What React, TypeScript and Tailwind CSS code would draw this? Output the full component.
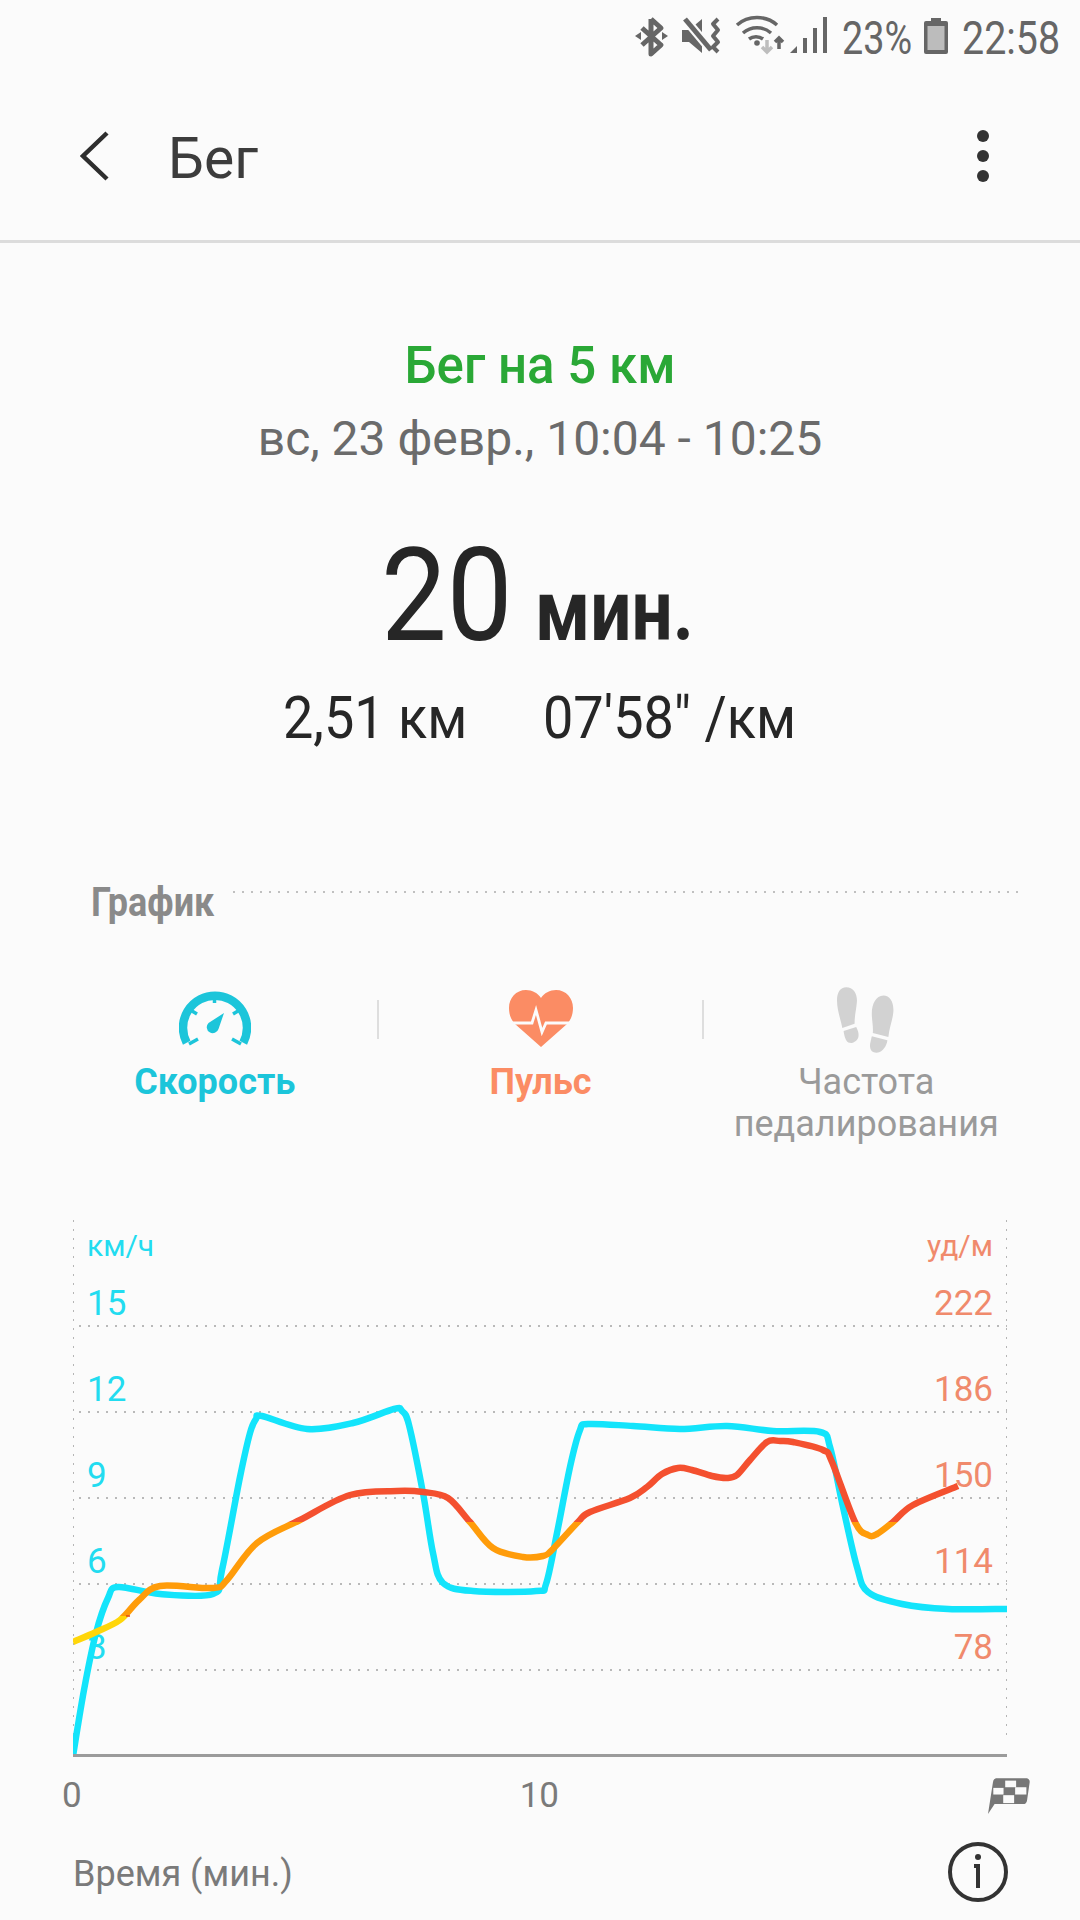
// Running workout detail screen
type Pt = [number, number];

// chart box starts at x=73, y=1220 in page coordinates
const OX = 73;
const OY = 1220;

const SPEED: Pt[] = [
  [73, 1756], [84, 1690], [96, 1633], [108, 1598], [118, 1587], [160, 1594], [213, 1594], [222, 1570],
  [240, 1477], [250, 1433], [256, 1419], [262, 1416], [307, 1429], [353, 1423], [394, 1409], [402, 1411], [409, 1425],
  [423, 1493], [433, 1553], [443, 1583], [473, 1591], [536, 1591], [546, 1584], [557, 1533],
  [570, 1467], [580, 1430], [588, 1424], [633, 1426], [680, 1429], [727, 1426], [773, 1431], [820, 1432],
  [830, 1447], [843, 1507], [857, 1567], [868, 1592], [902, 1604], [948, 1609], [1007, 1609],
];

const PULSE: Pt[] = [
  [73, 1642], [96, 1632], [120, 1620], [139, 1600], [160, 1586], [213, 1588], [227, 1580],
  [257, 1543], [300, 1520], [350, 1495], [397, 1491], [423, 1492], [448, 1498], [470, 1522],
  [493, 1548], [523, 1557], [543, 1556], [552, 1550], [578, 1522], [590, 1512], [630, 1498],
  [647, 1487], [662, 1474], [678, 1468], [692, 1470], [712, 1476], [727, 1478], [737, 1475],
  [750, 1460], [767, 1442], [780, 1441], [793, 1442], [823, 1450], [832, 1462], [855, 1522],
  [868, 1535], [877, 1534], [893, 1522], [913, 1505], [958, 1486],
];

// catmull-rom through the points, returned as cubic beziers
function smooth(points: Pt[]) {
  const p = points.map(([x, y]): Pt => [x - OX, y - OY]);
  let d = `M${p[0][0]} ${p[0][1]}`;
  for (let i = 0; i < p.length - 1; i++) {
    const a = p[Math.max(i - 1, 0)];
    const b = p[i];
    const c = p[i + 1];
    const e = p[Math.min(i + 2, p.length - 1)];
    const c1x = b[0] + (c[0] - a[0]) / 6;
    const c1y = b[1] + (c[1] - a[1]) / 6;
    const c2x = c[0] - (e[0] - b[0]) / 6;
    const c2y = c[1] - (e[1] - b[1]) / 6;
    d += ` C${c1x.toFixed(1)} ${c1y.toFixed(1)} ${c2x.toFixed(1)} ${c2y.toFixed(1)} ${c[0]} ${c[1]}`;
  }
  return d;
}

const ROWS = [
  { left: "15", right: "222" },
  { left: "12", right: "186" },
  { left: "9", right: "150" },
  { left: "6", right: "114" },
  { left: "3", right: "78" },
];

function StatusIcons() {
  return (
    <svg width="200" height="50" viewBox="0 0 200 50" fill="none" className="shrink-0 -mt-[2px]">
      {/* bluetooth */}
      <path d="M21 9v35l10-9-19-17M21 9l10 9-19 17" stroke="#666" strokeWidth="5" strokeLinejoin="round" />
      <path d="M5 26l6-4v8zM38 26l-6-4v8z" fill="#666" />
      {/* muted speaker */}
      <path d="M52 20h7l13-11v34L59 32h-7z" fill="#666" />
      <path d="M55 9l26 31" stroke="#fbfbfb" strokeWidth="9" />
      <path d="M55 9l26 31" stroke="#666" strokeWidth="5" />
      <path d="M88 9l-5 5 5 6-5 6 5 6-5 5 5 5" stroke="#666" strokeWidth="4" strokeLinejoin="round" />
      {/* wifi */}
      <path d="M107 15c11-10 29-10 40 0M113 23c8-7 20-7 28 0M119 29c4-3 10-3 14 0" stroke="#666" strokeWidth="3.5" />
      <circle cx="127" cy="33" r="2.8" fill="#666" />
      <path d="M137 30v12M132 37l5 5 5-5" stroke="#bdbdbd" strokeWidth="3.5" />
      <path d="M149 39V28M145 32l4-4 4 4" stroke="#666" strokeWidth="3.5" />
      {/* signal */}
      <path d="M160 43l7-7v7z" fill="#666" />
      <rect x="173" y="28" width="4" height="15" fill="#666" />
      <rect x="183" y="18" width="4" height="25" fill="#666" />
      <rect x="193" y="7" width="4" height="36" fill="#666" />
    </svg>
  );
}

function Battery() {
  return (
    <svg width="24" height="36" viewBox="0 0 24 36" className="block shrink-0">
      <rect x="7" y="0" width="10" height="4" fill="#666" />
      <rect x="0" y="3" width="24" height="33" rx="2" fill="#666" />
      <rect x="3.5" y="8" width="17" height="24" fill="#bcbcbc" />
    </svg>
  );
}

function SpeedIcon() {
  return (
    <svg width="72" height="58" viewBox="0 0 72 58" fill="none" className="block">
      <path d="M7.7 52.7A32 32 0 1 1 64.3 52.7" stroke="#1cc5da" strokeWidth="8.5" />
      <path d="M35.5 6v7M13 21l5 3M59 21l-5 3M10 54l9-5M62 54l-9-5" stroke="#1cc5da" strokeWidth="3.5" />
      <path d="M45 23L39.5 39a6 6 0 1 1-10-6z" fill="#1cc5da" />
    </svg>
  );
}

function HeartIcon() {
  return (
    <svg width="64" height="57" viewBox="0 0 64 57" className="block">
      <path
        d="M32 57L6 34C2 30 0 24 0 18 0 8 7 0 17 0c6 0 12 3 15 8 3-5 9-8 15-8 10 0 17 8 17 18 0 6-2 12-6 16z"
        fill="#fb8c64"
      />
      <path d="M0 33h23l4-13 6 22 4-9h27" fill="none" stroke="#fbfbfb" strokeWidth="2.8" />
    </svg>
  );
}

function FeetIcon() {
  return (
    <svg width="58" height="67" viewBox="50 20 175 201" className="block">
      <g fill="#d2d2d2">
        <path d="M78 20C100 20 112 40 110 65 108 90 103 105 103 130L66 143C62 120 50 90 50 60 50 35 60 20 78 20z" />
        <path d="M70 152L108 140C113 150 116 158 115 167 114 180 100 190 88 188 78 186 72 170 70 152z" />
        <path d="M190 45C210 45 222 65 220 95 218 120 208 140 205 170L158 158C160 140 155 120 155 100 155 70 168 45 190 45z" />
        <path d="M155 168L202 180C200 195 190 215 170 218 152 218 148 205 150 190z" />
      </g>
    </svg>
  );
}

function FlagIcon() {
  return (
    <svg width="43" height="38" viewBox="40 20 130 113" className="block">
      <path d="M55 35c1-7 5-12 12-12h88c7 0 12 5 11 12l-8 55c-1 7-5 11-12 11H60l-20 30z" fill="#777" />
      <rect x="92" y="30" width="33" height="20" fill="#fbfbfb" />
      <rect x="56" y="52" width="31" height="20" fill="#fbfbfb" />
      <rect x="122" y="50" width="34" height="22" fill="#fbfbfb" />
      <rect x="86" y="74" width="33" height="24" fill="#fbfbfb" />
    </svg>
  );
}

function Chart() {
  const grid = [106, 192, 278, 364, 450];
  return (
    <div className="relative ml-[73px] w-[934px] h-[537px]">
      <div className="flex flex-col">
        <div className="h-[42px] flex justify-between items-end px-[14px] text-[30px] leading-[32px]">
          <span className="text-[#22dcf0]">км/ч</span>
          <span className="text-[#f08a6c]">уд/м</span>
        </div>
        {ROWS.map((r, i) => (
          <div
            key={r.left}
            className={`${i === 0 ? "h-[64px]" : "h-[86px]"} flex justify-between items-end px-[14px] pb-[2px] text-[35px] leading-[40px]`}
          >
            <span className="text-[#22dcf0]">{r.left}</span>
            <span className="text-[#f08a6c]">{r.right}</span>
          </div>
        ))}
      </div>
      <svg width="934" height="537" viewBox="0 0 934 537" fill="none" className="absolute inset-0">
        <defs>
          <linearGradient id="pulse" gradientUnits="userSpaceOnUse" x1="0" y1="200" x2="0" y2="440">
            <stop offset="0.425" stopColor="#f4502f" />
            <stop offset="0.425" stopColor="#ff9c0a" />
            <stop offset="0.817" stopColor="#ff9c0a" />
            <stop offset="0.817" stopColor="#ffd60a" />
          </linearGradient>
        </defs>
        <path d="M0 0V516M934 0V516" stroke="#b5b5b5" strokeWidth="2" strokeDasharray="2 7" />
        {grid.map((y) => (
          <line key={y} x1="6" x2="934" y1={y} y2={y} stroke="#b9b9b9" strokeWidth="2" strokeDasharray="2 7" />
        ))}
        <path d={smooth(SPEED)} stroke="#13e4fb" strokeWidth="6.5" strokeLinejoin="round" />
        <path d={smooth(PULSE)} stroke="url(#pulse)" strokeWidth="6.5" strokeLinejoin="round" />
        <path d="M53 396h4" stroke="#e0471c" strokeWidth="1.5" />
      </svg>
      <div className="absolute left-0 right-0 bottom-0 h-[3px] bg-[#9b9b9b]" />
    </div>
  );
}

export default function App() {
  return (
    <div className="w-[1080px] h-[1920px] overflow-hidden bg-[#fbfbfb] font-['Roboto',sans-serif]">
      {/* status bar */}
      <div className="h-[72px] pl-[630px] flex items-center text-[#666]">
        <StatusIcons />
        <span className="ml-[12px] mt-[3px] w-[68px] text-[46px] leading-none whitespace-nowrap origin-left scale-x-[0.82]">23%</span>
        <span className="ml-[14px]"><Battery /></span>
        <span className="ml-[14px] mt-[3px] w-[95px] text-[46px] leading-none whitespace-nowrap origin-left scale-x-[0.856]">22:58</span>
      </div>

      {/* app bar */}
      <div className="h-[171px] flex items-center border-b-[3px] border-[#dcdcdc] pl-[80px] pr-[91px]">
        <svg width="30" height="50" viewBox="0 0 30 50" fill="none" className="shrink-0">
          <path d="M27 2L3 25l24 23" stroke="#2e2e2e" strokeWidth="4.5" />
        </svg>
        <span className="ml-[58px] mt-[6px] text-[57px] text-[#3c3c3c] grow">Бег</span>
        <div className="flex flex-col gap-[8px]">
          <span className="w-[12px] h-[12px] rounded-full bg-[#333]" />
          <span className="w-[12px] h-[12px] rounded-full bg-[#333]" />
          <span className="w-[12px] h-[12px] rounded-full bg-[#333]" />
        </div>
      </div>

      {/* summary */}
      <div className="flex flex-col items-center pt-[96px]">
        <div className="text-[51px] leading-[54px] font-medium text-[#2aa836]">Бег на 5 км</div>
        <div className="mt-[19px] text-[48px] leading-[54px] text-[#6b6b6b]">вс, 23 февр., 10:04 - 10:25</div>
        <div className="mt-[65px] flex items-baseline text-[#262626]">
          <span className="w-[130px] text-[130px] leading-[130px] whitespace-nowrap origin-left scale-x-[0.9]">20</span>
          <span className="ml-[24px] w-[164px] text-[86px] leading-[86px] font-bold whitespace-nowrap origin-left scale-x-[0.846]">мин.</span>
        </div>
        <div className="mt-[22px] flex text-[60px] leading-[70px] text-[#262626]">
          <span className="w-[178px] whitespace-nowrap origin-left scale-x-[0.9]">2,51 км</span>
          <span className="ml-[82px] w-[255px] whitespace-nowrap origin-left scale-x-[0.9]">07'58" /км</span>
        </div>
      </div>

      {/* chart heading */}
      <div className="mt-[126px] ml-[91px] mr-[60px] flex items-start">
        <span className="w-[122px] text-[40px] leading-[48px] font-bold text-[#8a8a8a] whitespace-nowrap origin-left scale-x-[0.9]">График</span>
        <div className="ml-[20px] mt-[12px] grow h-[2px] bg-[repeating-linear-gradient(90deg,#c0c0c0_0_2px,transparent_2px_9px)]" />
      </div>

      {/* metric tabs */}
      <div className="mt-[63px] ml-[53px] w-[975px] flex">
        <div className="flex-1 flex flex-col items-center">
          <SpeedIcon />
          <div className="mt-[13px] text-[36px] leading-[42px] font-bold text-[#1cc5da]">Скорость</div>
        </div>
        <div className="w-[2px] h-[39px] mt-[10px] bg-[#dedede]" />
        <div className="flex-1 flex flex-col items-center">
          <HeartIcon />
          <div className="mt-[14px] text-[36px] leading-[42px] font-bold text-[#fb8c64]">Пульс</div>
        </div>
        <div className="w-[2px] h-[39px] mt-[10px] bg-[#dedede]" />
        <div className="flex-1 flex flex-col items-center text-center -mt-[3px]">
          <FeetIcon />
          <div className="mt-[7px] text-[36px] leading-[42px] text-[#9a9a9a]">Частота<br />педалирования</div>
        </div>
      </div>

      <div className="mt-[75px]">
        <Chart />
      </div>

      {/* x axis */}
      <div className="relative h-[60px] text-[35px] text-[#7a7a7a] leading-[40px] pt-[19px] flex">
        <span className="ml-[62px]">0</span>
        <span className="ml-[438px]">10</span>
        <span className="absolute left-[988px] top-[20px]"><FlagIcon /></span>
      </div>

      <div className="mt-[25px] h-[60px] pl-[73px] pr-[72px] flex items-center justify-between">
        <span className="mt-[3px] text-[36px] text-[#7a7a7a]">Время (мин.)</span>
        <svg width="60" height="60" viewBox="0 0 60 60" fill="none">
          <circle cx="30" cy="30" r="28" stroke="#333" strokeWidth="4" />
          <circle cx="30" cy="15" r="3" fill="#333" />
          <path d="M26 24h4v22" stroke="#333" strokeWidth="4" />
        </svg>
      </div>
    </div>
  );
}
